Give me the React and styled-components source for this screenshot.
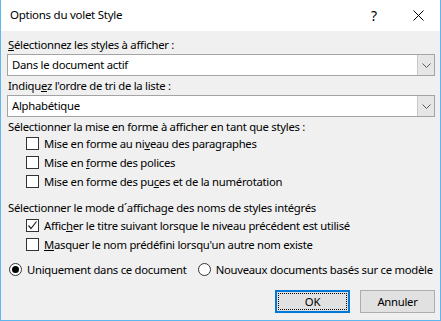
import styled, { createGlobalStyle } from "styled-components";

const GlobalStyle = createGlobalStyle`
  html, body {
    margin: 0;
    padding: 0;
    background: #ffffff;
  }
  body {
    font-family: "Noto Sans", "Liberation Sans", sans-serif;
    font-size: 11.3px;
    letter-spacing: -0.27px;
    color: #000000;
  }
`;

const formatOptions = [
  { id: "para", before: "Mise en forme au ni", key: "v", after: "eau des paragraphes" },
  { id: "font", before: "Mise en ", key: "f", after: "orme des polices" },
  { id: "list", before: "Mise en forme des pu", key: "c", after: "es et de la numérotation" },
];

const displayOptions = [
  { id: "next", before: "Affic", key: "h", after: "er le titre suivant lorsque le niveau précédent est utilisé", checked: true },
  { id: "hide", before: "", key: "M", after: "asquer le nom prédéfini lorsqu'un autre nom existe" },
];

function Chevron() {
  return (
    <svg width="9" height="5" viewBox="0 0 9 5">
      <path d="M0.5 0.5 L4.5 4.5 L8.5 0.5" fill="none" stroke="#5a5a5a" strokeWidth="1" />
    </svg>
  );
}

function CloseIcon() {
  return (
    <svg width="11" height="11" viewBox="0 0 11 11">
      <path d="M0.5 0.5 L10.5 10.5 M10.5 0.5 L0.5 10.5" stroke="#000" strokeWidth="1" />
    </svg>
  );
}

function Check() {
  return (
    <svg width="11" height="11" viewBox="0 0 11 11">
      <path d="M1.5 5.5 L4 8.5 L9.5 1.5" fill="none" stroke="#222" strokeWidth="1.2" />
    </svg>
  );
}

function Combo({ value }) {
  return (
    <ComboBox>
      <ComboValue>{value}</ComboValue>
      <ComboButton>
        <Chevron />
      </ComboButton>
    </ComboBox>
  );
}

function CheckRow({ option }) {
  return (
    <OptionRow>
      <CheckBox>{option.checked && <Check />}</CheckBox>
      <span>
        {option.before}
        <u>{option.key}</u>
        {option.after}
      </span>
    </OptionRow>
  );
}

export default function App() {
  return (
    <>
      <GlobalStyle />
      <Window>
        <TitleBar>
          <Title>Options du volet Style</Title>
          <TitleButton>?</TitleButton>
          <TitleButton>
            <CloseIcon />
          </TitleButton>
        </TitleBar>
        <Body>
          <Label>
            <u>S</u>électionnez les styles à afficher :
          </Label>
          <Combo value="Dans le document actif" />
          <Label gap={2}>
            Indiqu<u>e</u>z l'ordre de tri de la liste :
          </Label>
          <Combo value="Alphabétique" />
          <Label gap={2}>Sélectionner la mise en forme à afficher en tant que styles :</Label>
          <OptionList offset={-1}>
            {formatOptions.map(o => (
              <CheckRow key={o.id} option={o} />
            ))}
          </OptionList>
          <Label gap={9}>Sélectionner le mode d´affichage des noms de styles intégrés</Label>
          <OptionList offset={0}>
            {displayOptions.map(o => (
              <CheckRow key={o.id} option={o} />
            ))}
          </OptionList>
          <RadioRow>
            <RadioItem>
              <Radio selected />
              <span>Uniquement dans ce document</span>
            </RadioItem>
            <RadioItem>
              <Radio />
              <span>Nouveaux documents basés sur ce modèle</span>
            </RadioItem>
          </RadioRow>
          <Buttons>
            <Button primary>
              <FocusRing>OK</FocusRing>
            </Button>
            <Button>Annuler</Button>
          </Buttons>
        </Body>
      </Window>
    </>
  );
}

const Window = styled.div`
  width: 441px;
  height: 321px;
  box-sizing: border-box;
  border: 1px solid #5eb6ee;
  border-top: none;
  display: flex;
  flex-direction: column;
  background: #f0f0f0;
`;

const TitleBar = styled.div`
  height: 31px;
  flex-shrink: 0;
  display: flex;
  align-items: center;
  background: #ffffff;
  padding-left: 9px;
`;

const Title = styled.div`
  flex: 1;
  font-size: 11.5px;
  padding-bottom: 2px;
`;

const TitleButton = styled.div`
  width: 44px;
  height: 31px;
  display: flex;
  align-items: center;
  justify-content: center;
  font-size: 14px;
  color: #000;
  padding-bottom: 1px;
  box-sizing: border-box;
`;

const Body = styled.div`
  flex: 1;
  display: flex;
  flex-direction: column;
  padding: 6px 5px 0 6px;
`;

const Label = styled.div`
  height: 16px;
  line-height: 16px;
  padding-left: 1px;
  margin-top: ${props => props.gap || 0}px;
  white-space: nowrap;
`;

const ComboBox = styled.div`
  height: 22px;
  margin-top: 1px;
  box-sizing: border-box;
  border: 1px solid #a4a4a4;
  background: #ffffff;
  display: flex;
  align-items: stretch;
`;

const ComboValue = styled.div`
  flex: 1;
  padding-left: 4px;
  line-height: 20px;
`;

const ComboButton = styled.div`
  width: 16px;
  border-left: 1px solid #c8c8c8;
  background: #e6e6e6;
  display: flex;
  align-items: center;
  justify-content: center;
`;

const OptionList = styled.div`
  display: flex;
  flex-direction: column;
  padding-left: 19px;
  margin-top: ${props => props.offset}px;
`;

const OptionRow = styled.div`
  height: 19px;
  display: flex;
  align-items: center;
  gap: 5px;
  white-space: nowrap;
`;

const CheckBox = styled.div`
  width: 13px;
  height: 13px;
  box-sizing: border-box;
  border: 1px solid #333333;
  background: #ffffff;
  display: flex;
  align-items: center;
  justify-content: center;
`;

const RadioRow = styled.div`
  display: flex;
  align-items: center;
  gap: 11px;
  margin-top: 6px;
  height: 19px;
  padding-left: 2px;
`;

const RadioItem = styled.div`
  display: flex;
  align-items: center;
  gap: 5px;
  white-space: nowrap;
`;

const Radio = styled.div`
  width: 13px;
  height: 13px;
  box-sizing: border-box;
  border-radius: 50%;
  border: 1px solid #333333;
  background: #ffffff;
  display: flex;
  align-items: center;
  justify-content: center;

  &::after {
    content: "";
    width: 7px;
    height: 7px;
    border-radius: 50%;
    background: #000000;
    display: ${props => (props.selected ? "block" : "none")};
  }
`;

const Buttons = styled.div`
  display: flex;
  justify-content: flex-end;
  gap: 10px;
  margin-top: 11px;
`;

const Button = styled.div`
  width: 75px;
  height: 23px;
  box-sizing: border-box;
  border: ${props => (props.primary ? "2px solid #0078d7" : "1px solid #adadad")};
  background: #e1e1e1;
  display: flex;
  align-items: center;
  justify-content: center;
  padding: ${props => (props.primary ? "1px" : "0")};
`;

const FocusRing = styled.div`
  width: 100%;
  height: 100%;
  box-sizing: border-box;
  border: 1px dotted #000000;
  display: flex;
  align-items: center;
  justify-content: center;
`;
